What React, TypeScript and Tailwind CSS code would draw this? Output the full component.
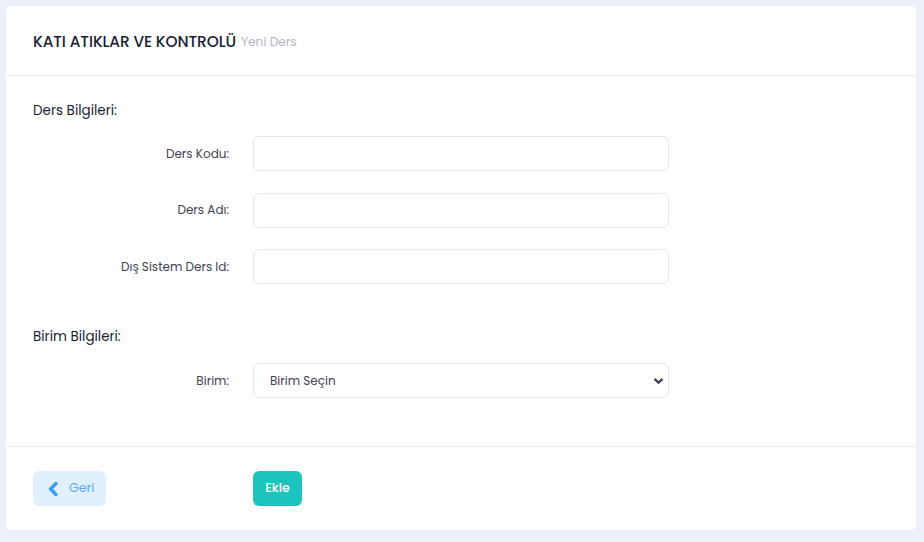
import React from "react";

const font = { fontFamily: '"Poppins", "Open Sans", "Liberation Sans", sans-serif' };

function Row({ label, children }: { label: string; children: React.ReactNode }) {
  return (
    <div className="flex items-center">
      <div className="w-[196px] text-right text-[12px] text-[#3F4254] leading-5">{label}</div>
      <div className="ml-[24px] w-[416px]">{children}</div>
    </div>
  );
}

function Input() {
  return (
    <div className="h-[35px] w-full rounded-[6px] border border-[#E4E6EF] bg-white" />
  );
}

export default function App() {
  return (
    <div className="min-h-[542px] bg-[#EEF0F8] pt-[6px] pl-[6px] pr-[8px] pb-[11px]" style={font}>
      <div className="rounded-[5px] bg-white">
        <div className="flex h-[70px] items-center border-b border-[#EBEDF3] px-[27px] pt-[2px]">
          <span className="text-[15.4px] font-medium text-[#181C32] tracking-[-0.1px]">KATI ATIKLAR VE KONTROLÜ</span>
          <span className="ml-[5px] text-[12.2px] text-[#B5B5C3] mt-[1px]">Yeni Ders</span>
        </div>
        <div className="px-[27px] pt-[25px] pb-[48px]">
          <div className="text-[13.5px] font-normal leading-5 text-[#181C32]">Ders Bilgileri:</div>
          <div className="mt-[15px] flex flex-col gap-[21.5px]">
            <Row label="Ders Kodu:"><Input /></Row>
            <Row label="Ders Adı:"><Input /></Row>
            <Row label="Dış Sistem Ders Id:"><Input /></Row>
          </div>
          <div className="mt-[43px] text-[13.5px] font-normal leading-5 text-[#181C32]">Birim Bilgileri:</div>
          <div className="mt-[16px]">
            <Row label="Birim:">
              <div className="flex h-[35px] w-full items-center justify-between rounded-[6px] border border-[#E4E6EF] bg-white pl-[16px] pr-[4px]">
                <span className="text-[12px] text-[#3F4254]">Birim Seçin</span>
                <svg width="11" height="8" viewBox="0 0 11 8">
                  <path d="M1.5 1.8 L5.5 5.6 L9.5 1.8" fill="none" stroke="#3F4254" strokeWidth="2.4" />
                </svg>
              </div>
            </Row>
          </div>
        </div>
        <div className="flex items-center border-t border-[#EBEDF3] px-[27px] pt-[24px] pb-[24px]">
          <button className="flex h-[35px] w-[73px] items-center rounded-[6px] bg-[#E1F0FF] pl-[14px] text-[12.5px] text-[#3699FF]">
            <svg width="12" height="16" viewBox="0 0 12 16">
              <path d="M9 2.5 L3.5 8 L9 13.5" fill="none" stroke="#3699FF" strokeWidth="3.4" strokeLinecap="round" strokeLinejoin="round" />
            </svg>
            <span className="ml-[10px] text-[#5EA8FB]">Geri</span>
          </button>
          <button className="ml-[147px] flex h-[35px] w-[49px] items-center justify-center rounded-[6px] bg-[#1BC5BD] text-[12.5px] font-medium text-white">
            Ekle
          </button>
        </div>
      </div>
    </div>
  );
}
